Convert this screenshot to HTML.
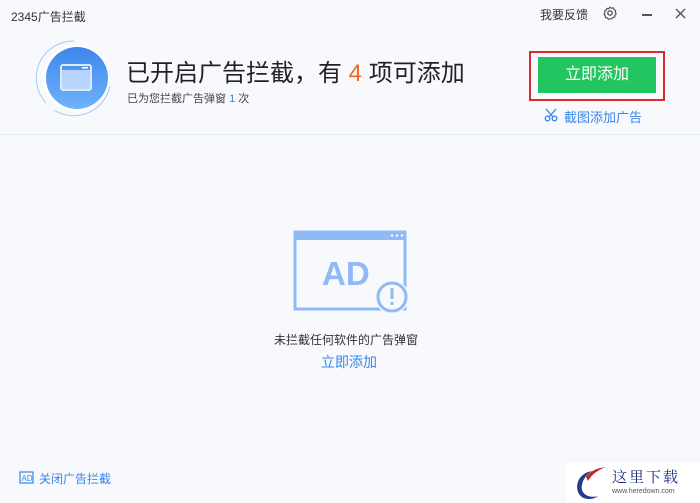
<!DOCTYPE html>
<html><head><meta charset="utf-8"><style>
*{margin:0;padding:0;box-sizing:border-box}
body{width:700px;height:503px;background:#f7f9fd;font-family:"Liberation Sans","Noto Sans CJK SC",sans-serif;position:relative;overflow:hidden;color:#333}
.a{position:absolute;white-space:nowrap}
</style></head><body>
<div class="a" style="left:11px;top:8px;font-size:12px;color:#333">2345广告拦截</div>
<div class="a" style="left:540px;top:6px;font-size:12px;color:#333">我要反馈</div>
<svg class="a" style="left:603px;top:6px" width="14" height="14" viewBox="0 0 14 14"><circle cx="7" cy="7" r="2.2" fill="none" stroke="#555" stroke-width="1.3"/><path d="M7 1.2l1.5 1 1.8-.3.7 1.7 1.6.9-.3 1.8.9 1.6-1.3 1.3-.1 1.8-1.8.4-1.2 1.4L7 12.8l-1.6.5-1.2-1.4-1.8-.4-.1-1.8L1 8.4l.9-1.6-.3-1.8 1.6-.9.7-1.7 1.8.3z" fill="none" stroke="#555" stroke-width="1.2"/></svg>
<div class="a" style="left:642px;top:14px;width:10px;height:1.5px;background:#555"></div>
<svg class="a" style="left:675px;top:8px" width="11" height="11"><path d="M1 1L10 10M10 1L1 10" stroke="#555" stroke-width="1.4"/></svg>
<div class="a" style="left:0;top:134px;width:700px;height:1px;background:#e8ebf2"></div>
<svg class="a" style="left:34px;top:38px" width="80" height="80"><path d="M40 3A37 37 0 0 0 12 65" fill="none" stroke="#a9c8f3" stroke-width="1"/><path d="M20 72A37 37 0 0 0 76 48" fill="none" stroke="#a9c8f3" stroke-width="1"/><circle cx="42" cy="40" r="33" fill="#fff"/><defs><linearGradient id="g" x1="0" y1="0" x2="0" y2="1"><stop offset="0" stop-color="#3d86ec"/><stop offset="1" stop-color="#6fb3fa"/></linearGradient></defs><circle cx="43" cy="40" r="31" fill="url(#g)"/><rect x="27" y="27" width="30" height="25" rx="2" fill="none" stroke="#dbe9ff" stroke-width="2"/><rect x="28" y="32" width="28" height="19" fill="#cfe2ff" opacity=".8"/><rect x="48" y="29" width="6" height="1.5" fill="#fff"/></svg>
<div class="a" style="left:126px;top:53px;font-size:24px;color:#222">已开启广告拦截，有 <span style="color:#f06a1c">4</span> 项可添加</div>
<div class="a" style="left:127px;top:90px;font-size:11px;color:#444">已为您拦截广告弹窗 <span style="color:#3a86e8">1</span> 次</div>
<div class="a" style="left:529px;top:51px;width:136px;height:50px;border:2px solid #e0282f"></div>
<div class="a" style="left:538px;top:57px;width:118px;height:36px;background:#22c55f;color:#fff;font-size:16px;text-align:center;line-height:36px">立即添加</div>
<svg class="a" style="left:544px;top:108px" width="14" height="14"><circle cx="3.5" cy="10.5" r="2.3" fill="none" stroke="#3a86e8" stroke-width="1.3"/><circle cx="10.5" cy="10.5" r="2.3" fill="none" stroke="#3a86e8" stroke-width="1.3"/><path d="M5 9L12 1M9 9L2 1" stroke="#3a86e8" stroke-width="1.3"/></svg>
<div class="a" style="left:564px;top:107px;font-size:13px;color:#3a86e8">截图添加广告</div>
<svg class="a" style="left:292px;top:229px" width="120" height="85"><rect x="3" y="3" width="110" height="77" fill="none" stroke="#8fbaf5" stroke-width="3"/><rect x="2" y="2" width="112" height="9" fill="#8fbaf5"/><circle cx="100" cy="6.5" r="1.2" fill="#fff"/><circle cx="105" cy="6.5" r="1.2" fill="#fff"/><circle cx="110" cy="6.5" r="1.2" fill="#fff"/><text x="30" y="56" font-family="Liberation Sans" font-weight="bold" font-size="33" fill="#8fbaf5">AD</text><circle cx="100" cy="68" r="17" fill="#f7f9fd"/><circle cx="100" cy="68" r="14" fill="none" stroke="#8fbaf5" stroke-width="3"/><rect x="98.5" y="59" width="3" height="11" fill="#8fbaf5"/><rect x="98.5" y="73" width="3" height="3" fill="#8fbaf5"/></svg>
<div class="a" style="left:274px;top:331px;font-size:12px;color:#333">未拦截任何软件的广告弹窗</div>
<div class="a" style="left:321px;top:352px;font-size:14px;color:#3a86e8">立即添加</div>
<svg class="a" style="left:19px;top:471px" width="15" height="14"><rect x="1" y="1" width="13" height="11" fill="none" stroke="#3a86e8" stroke-width="1.2"/><text x="2.5" y="10" font-size="8" font-family="Liberation Sans" fill="#3a86e8">AD</text></svg>
<div class="a" style="left:39px;top:470px;font-size:12px;color:#3a86e8">关闭广告拦截</div>
<div class="a" style="left:566px;top:463px;width:134px;height:40px;background:#fff"></div>
<svg class="a" style="left:572px;top:465px" width="35" height="38"><path d="M20 6C8 8 3 18 6 27c3 8 14 9 20 4C16 34 8 28 10 20c1-7 6-11 10-14z" fill="#2a3a8a"/><path d="M14 12C20 4 28 3 34 2 26 5 20 9 16 16z" fill="#c0282c"/></svg>
<div class="a" style="left:612px;top:466px;font-size:15px;color:#1a2a7a;font-family:'Liberation Serif','Noto Serif CJK SC',serif;letter-spacing:2px">这里下载</div>
<div class="a" style="left:612px;top:488px;font-size:7px;color:#555">www.heredown.com</div>
</body></html>
